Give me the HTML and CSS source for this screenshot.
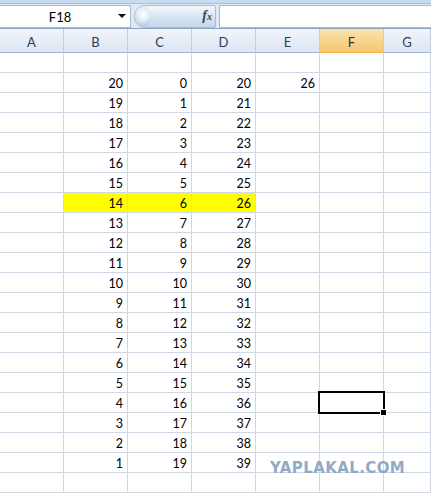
FILE: index.html
```html
<!DOCTYPE html>
<html lang="ru">
<head>
  <meta charset="UTF-8" />
  <title>Книга1 - Лист1</title>
  <meta name="viewport" content="width=device-width, initial-scale=1.0" />
  <link rel="stylesheet" href="styles.css">
</head>
<body>

  <!-- Formula bar -->
  <div class="formula-bar">
    <div class="name-box">
      <span class="cell-ref">F18</span>
      <span class="drop"></span>
    </div>
    <div class="fx-pill">
      <span class="grip"></span>
      <span class="fx">f<small>x</small></span>
    </div>
    <div class="formula-input"></div>
  </div>

  <!-- Sheet -->
  <div class="sheet" id="sheet">
    <div class="hdr">A</div>
    <div class="hdr">B</div>
    <div class="hdr">C</div>
    <div class="hdr">D</div>
    <div class="hdr">E</div>
    <div class="hdr active">F</div>
    <div class="hdr">G</div>
  </div>

  <div class="watermark">YAPLAKAL.COM</div>

  <script>
    const sheet = document.getElementById("sheet");
    const COLS = 7;
    const ROWS = 22;

    function addCell(text, cls) {
      const c = document.createElement("div");
      c.className = "cell" + (cls ? " " + cls : "");
      c.textContent = text;
      sheet.appendChild(c);
    }

    for (let r = 1; r <= ROWS; r++) {
      for (let col = 0; col < COLS; col++) {
        let text = "";
        let cls = "";
        if (r >= 2 && r <= 21) {
          const i = r - 2;
          if (col === 1) text = 20 - i;
          if (col === 2) text = i;
          if (col === 3) text = 20 + i;
        }
        if (r === 2 && col === 4) text = 26;
        if (r === 8 && col >= 1 && col <= 3) cls = "hl";
        if (r === 18 && col === 5) cls = "selected";
        addCell(text, cls);
      }
    }
  </script>
</body>
</html>
```

FILE: styles.css
```css
* {
  margin: 0;
  padding: 0;
  box-sizing: border-box;
}

body {
  width: 431px;
  height: 498px;
  overflow: hidden;
  background: #fff;
  font-family: Lato, "Open Sans", sans-serif;
  position: relative;
}

.formula-bar {
  height: 29px;
  display: flex;
  align-items: center;
  gap: 3px;
  padding-top: 4px;
  background: linear-gradient(#c9dbf1 0, #c9dbf1 3px, #a9c0de 3px, #a9c0de 4px, #dfe9f5 4px, #dfe9f5 100%);
  border-bottom: 1px solid #8ba4c4;
}

.name-box {
  width: 131px;
  height: 23px;
  display: flex;
  align-items: center;
  background: #fff;
  border: 1px solid #a5bcd8;
  border-left: none;
}

.cell-ref {
  flex: 1;
  text-align: center;
  font-size: 13px;
  color: #000;
  padding-left: 2px;
  padding-top: 1px;
}

.drop {
  width: 0;
  height: 0;
  border-left: 4px solid transparent;
  border-right: 4px solid transparent;
  border-top: 4px solid #111;
  margin-right: 4px;
}

.fx-pill {
  width: 82px;
  height: 23px;
  display: flex;
  align-items: center;
  justify-content: space-between;
  border-radius: 11px 2px 2px 11px;
  background: linear-gradient(#f4f8fd, #d6e3f3 55%, #c6d6ec);
  border: 1px solid #a7bbd6;
  padding: 0 3px 0 2px;
}

.grip {
  width: 14px;
  height: 19px;
  border-radius: 50%;
  background: radial-gradient(circle at 45% 40%, #fff 0, #e3ebf5 45%, #9fb3cc 100%);
}

.fx {
  font-family: "Liberation Serif", serif;
  font-style: italic;
  font-weight: bold;
  font-size: 14px;
  color: #444;
}

.fx small {
  font-size: 10px;
}

.formula-input {
  flex: 1;
  height: 23px;
  background: #fff;
  border: 1px solid #a5bcd8;
  border-right: none;
}

.sheet {
  display: grid;
  grid-template-columns: 64px 64px 64px 64px 64px 64px 47px;
  grid-template-rows: 24px;
  grid-auto-rows: 20px;
}

.hdr {
  display: flex;
  align-items: center;
  justify-content: center;
  padding-top: 2px;
  font-size: 13px;
  color: #2c3e57;
  background: linear-gradient(#f1f5fb, #dde6f2);
  border-right: 1px solid #c0cfe2;
  border-bottom: 1px solid #9eb6ce;
}

.hdr.active {
  background: linear-gradient(#fbe3b0, #f5c66f);
  color: #333;
  border-bottom-color: #f2b04f;
}

.cell {
  display: flex;
  align-items: flex-end;
  justify-content: flex-end;
  border-right: 1px solid #d0d7e5;
  border-bottom: 1px solid #d0d7e5;
  font-size: 12.5px;
  line-height: 14px;
  padding: 0 4px 1px 0;
  color: #000;
}

.cell.hl {
  background: #ffff00;
}

.cell.selected {
  position: relative;
}

.cell.selected::after {
  content: "";
  position: absolute;
  left: -2px;
  top: -2px;
  right: -2px;
  bottom: -2px;
  border: 2px solid #000;
}

.cell.selected::before {
  content: "";
  position: absolute;
  right: -4px;
  bottom: -4px;
  width: 5px;
  height: 5px;
  background: #000;
  border: 1px solid #fff;
  z-index: 1;
}

.watermark {
  position: absolute;
  left: 270px;
  top: 459px;
  font-family: "DejaVu Sans", sans-serif;
  font-weight: bold;
  font-size: 15px;
  letter-spacing: 0.4px;
  color: #86a3c0;
  opacity: 0.9;
}
```
